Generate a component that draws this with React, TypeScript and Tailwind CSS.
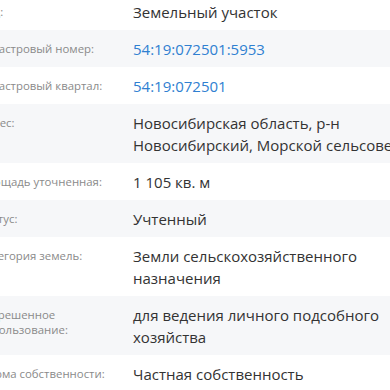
import React from 'react'

type Row = {
  label: string
  value: string[]
  link?: boolean
}

const rows: Row[] = [
  { label: 'Вид:', value: ['Земельный участок'] },
  { label: 'Кадастровый номер:', value: ['54:19:072501:5953'], link: true },
  { label: 'Кадастровый квартал:', value: ['54:19:072501'], link: true },
  { label: 'Адрес:', value: ['Новосибирская область, р-н', 'Новосибирский, Морской сельсовет'] },
  { label: 'Площадь уточненная:', value: ['1 105 кв. м'] },
  { label: 'Статус:', value: ['Учтенный'] },
  { label: 'Категория земель:', value: ['Земли сельскохозяйственного', 'назначения'] },
  { label: 'Разрешенное использование:', value: ['для ведения личного подсобного', 'хозяйства'] },
  { label: 'Форма собственности:', value: ['Частная собственность'] },
]

const App: React.FC = () => {
  return (
    <div
      className="w-[390px] h-[390px] overflow-hidden bg-white"
      style={{ fontFamily: '"Open Sans", "Noto Sans", sans-serif' }}
    >
      <div className="-mt-[7px] -ml-[21px] w-[480px]">
        {rows.map((row, i) => (
          <div
            key={row.label}
            className={`flex ${i % 2 === 1 ? 'bg-[#f6f7f9]' : 'bg-white'}`}
          >
            <div className="w-[154px] shrink-0 pt-[11px] pr-4 text-[11.4px] leading-[15px] text-[#8a8a8a]">
              {row.label}
            </div>
            <div
              className={`py-[7.5px] text-[15px] leading-[22px] ${
                row.link ? 'text-[#2f80d1]' : 'text-[#333333]'
              }`}
            >
              {row.value.map((line) => (
                <div key={line} className="whitespace-nowrap">
                  {line}
                </div>
              ))}
            </div>
          </div>
        ))}
      </div>
    </div>
  )
}

export default App
